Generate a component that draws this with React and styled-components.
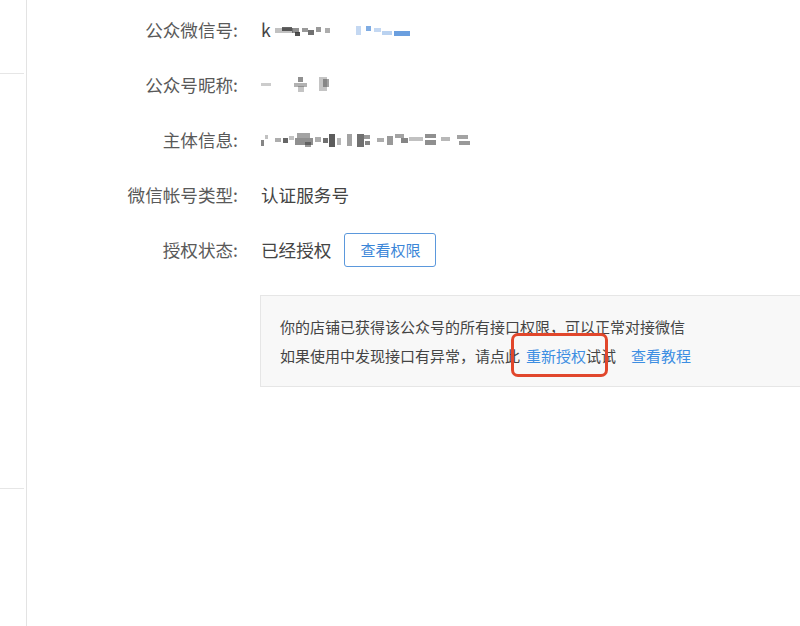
import React from "react";
import styled, { createGlobalStyle } from "styled-components";

const Global = createGlobalStyle`
  html, body { margin: 0; padding: 0; background: #fff; overflow: hidden; }
  body { font-family: "Noto Sans CJK SC", "Noto Sans", sans-serif; }
`;

const Page = styled.div`
  display: flex;
  width: 800px;
  height: 626px;
  overflow: hidden;
`;

const Sidebar = styled.aside`
  flex: 0 0 26px;
  border-right: 1px solid #e3e3e3;
  display: flex;
  flex-direction: column;
`;

const SideItem = styled.div`
  height: ${(p) => p.$h}px;
  border-bottom: ${(p) => (p.$line ? "1px solid #e6e6e6" : "none")};
  margin-right: 2px;
  flex: ${(p) => (p.$grow ? 1 : "none")};
`;

const Main = styled.main`
  flex: 1;
  padding-top: 2px;
  display: flex;
  flex-direction: column;
`;

const Row = styled.div`
  display: grid;
  grid-template-columns: 211px auto;
  column-gap: 23px;
  height: 55px;
  align-items: center;
`;

const Label = styled.div`
  text-align: right;
  font-size: 17.6px;
  color: #595959;
  white-space: nowrap;
`;

const Value = styled.div`
  display: flex;
  align-items: center;
  font-size: 17.6px;
  color: #444;
  white-space: nowrap;
`;

const Button = styled.button`
  margin-left: 13px;
  width: 92px;
  height: 34px;
  border: 1px solid #5b98dc;
  border-radius: 3px;
  background: #fff;
  color: #3b86d8;
  font-family: inherit;
  font-size: 15px;
  padding: 0;
  cursor: pointer;
`;

const InfoBox = styled.div`
  position: relative;
  margin-top: 18px;
  margin-left: 233px;
  width: 620px;
  box-sizing: border-box;
  padding: 16px 19px;
  background: #f8f8f8;
  border: 1px solid #e6e6e6;
  font-size: 15px;
  line-height: 29px;
  color: #444;
  white-space: nowrap;
`;

const Link = styled.a`
  color: #3d8ee2;
  text-decoration: none;
  margin: ${(p) => p.$m || "0"};
`;

const Highlight = styled.div`
  position: absolute;
  left: 250px;
  top: 37px;
  width: 97px;
  height: 44px;
  box-sizing: border-box;
  border: 3px solid #e1472c;
  border-radius: 7px;
  pointer-events: none;
`;

const Blur = ({ cells, w, h = 14, color }) => (
  <svg width={w} height={h} style={{ display: "block", filter: "blur(0.6px)" }}>
    {cells.map(([x, y, cw, ch, o], i) => (
      <rect key={i} x={x} y={y} width={cw} height={ch} fill={color} opacity={o} />
    ))}
  </svg>
);

const mosaicA = [
  [1, 5, 18, 5, 0.3], [8, 4, 10, 4, 0.75], [18, 5, 7, 5, 0.55], [21, 9, 5, 4, 0.85],
  [28, 5, 6, 4, 0.5], [34, 7, 6, 5, 0.7], [42, 4, 5, 5, 0.5], [51, 5, 5, 5, 0.4],
];
const mosaicB = [
  [0, 3, 5, 9, 0.3], [10, 3, 5, 5, 0.65], [18, 5, 7, 4, 0.3], [26, 8, 10, 4, 0.35],
  [38, 8, 16, 5, 0.75],
];
const mosaicC = [
  [0, 7, 10, 3, 0.3], [37, 1, 5, 5, 0.65], [33, 7, 13, 4, 0.45], [37, 10, 6, 6, 0.35],
  [58, 1, 8, 14, 0.35], [62, 3, 6, 8, 0.55],
];
const mosaicD = [
  [0, 8, 3, 6, 0.6], [4, 3, 3, 4, 0.3], [14, 6, 6, 4, 0.4], [22, 6, 5, 5, 0.75],
  [28, 4, 5, 4, 0.3], [36, 1, 13, 5, 0.45], [34, 6, 18, 7, 0.55], [44, 10, 6, 5, 0.5],
  [54, 5, 6, 5, 0.4], [62, 6, 5, 5, 0.7], [68, 2, 6, 13, 0.8], [76, 6, 4, 7, 0.35],
  [86, 2, 5, 12, 0.45], [96, 2, 7, 13, 0.7], [103, 3, 6, 4, 0.5], [104, 9, 5, 4, 0.6],
  [116, 6, 7, 4, 0.4], [126, 4, 6, 9, 0.5], [134, 2, 9, 4, 0.45], [140, 6, 7, 5, 0.6],
  [148, 5, 14, 4, 0.3], [164, 2, 11, 4, 0.55], [164, 8, 11, 5, 0.55], [180, 5, 9, 4, 0.35],
  [196, 3, 11, 4, 0.45], [198, 9, 11, 4, 0.5],
];

export default function App() {
  return (
    <>
      <Global />
      <Page>
        <Sidebar>
          <SideItem $h={73} $line />
          <SideItem $h={414} $line />
          <SideItem $grow />
        </Sidebar>
        <Main>
          <Row>
            <Label>公众微信号:</Label>
            <Value>
              k
              <span style={{ marginLeft: 3 }}>
                <Blur w={60} color="#333" cells={mosaicA} />
              </span>
              <span style={{ marginLeft: 22 }}>
                <Blur w={56} color="#3a7fd4" cells={mosaicB} />
              </span>
            </Value>
          </Row>
          <Row>
            <Label>公众号昵称:</Label>
            <Value>
              <Blur w={72} h={18} color="#555" cells={mosaicC} />
            </Value>
          </Row>
          <Row>
            <Label>主体信息:</Label>
            <Value>
              <Blur w={210} h={16} color="#333" cells={mosaicD} />
            </Value>
          </Row>
          <Row>
            <Label>微信帐号类型:</Label>
            <Value>认证服务号</Value>
          </Row>
          <Row>
            <Label>授权状态:</Label>
            <Value>
              已经授权
              <Button>查看权限</Button>
            </Value>
          </Row>
          <InfoBox>
            <div>你的店铺已获得该公众号的所有接口权限，可以正常对接微信</div>
            <div>
              如果使用中发现接口有异常，请点此
              <Link href="#" $m="0 0 0 6px">重新授权</Link>
              试试
              <Link href="#" $m="0 0 0 15px">查看教程</Link>
            </div>
            <Highlight />
          </InfoBox>
        </Main>
      </Page>
    </>
  );
}
